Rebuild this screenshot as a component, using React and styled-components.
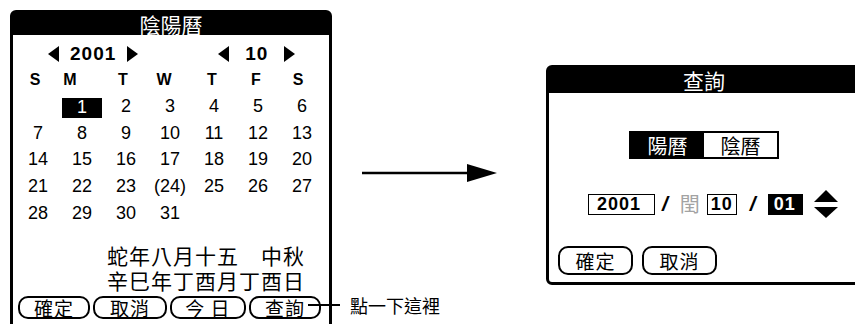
import styled, { createGlobalStyle } from "styled-components";

const GlobalStyle = createGlobalStyle`
  html, body { margin: 0; padding: 0; background: #fff; }
  body {
    font-family: "Liberation Sans", "Noto Sans CJK TC", sans-serif;
    color: #000;
  }
`;

const CJK = `"Noto Sans CJK TC", "Noto Sans CJK SC", sans-serif`;

const Stage = styled.div`
  position: relative;
  width: 855px;
  height: 324px;
  overflow: hidden;
  display: flex;
  align-items: flex-start;
`;

const Window = styled.div`
  flex-shrink: 0;
  box-sizing: border-box;
  width: ${p => p.$w}px;
  height: ${p => p.$h}px;
  margin-left: ${p => p.$left}px;
  margin-top: ${p => p.$top}px;
  border: 3px solid #000;
  border-radius: 6px;
  background: #fff;
  display: flex;
  flex-direction: column;
`;

const TitleBar = styled.div`
  height: ${p => p.$h}px;
  background: #000;
  color: #fff;
  font-family: ${CJK};
  font-size: 21px;
  line-height: ${p => p.$h}px;
  text-align: center;
`;

const NavRow = styled.div`
  display: flex;
  align-items: center;
  height: 22px;
  margin-top: 8px;
  padding-left: 35px;
`;

const Pager = styled.div`
  display: flex;
  align-items: center;
  gap: ${p => p.$gap}px;
  margin-left: ${p => p.$ml || 0}px;
`;

const PagerValue = styled.span`
  font-size: 19px;
  font-weight: bold;
  letter-spacing: 1px;
`;

const WeekRow = styled.div`
  display: grid;
  grid-template-columns: repeat(7, 44px);
  height: 20px;
  margin-top: 5px;
  padding-left: 3px;
`;

const WeekLabel = styled.span`
  text-align: center;
  font-size: 16px;
  font-weight: bold;
  line-height: 20px;
  transform: translateX(${p => p.$shift}px);
`;

const DayGrid = styled.div`
  display: grid;
  grid-template-columns: repeat(7, 44px);
  grid-auto-rows: 26.7px;
  margin-top: 3px;
  padding-left: 3px;
`;

const Day = styled.div`
  display: flex;
  align-items: center;
  justify-content: center;
  font-size: 18px;
`;

const Selected = styled.span`
  display: flex;
  align-items: center;
  justify-content: center;
  width: 40px;
  height: 20px;
  margin-top: 3px;
  background: #000;
  color: #fff;
`;

const Lunar = styled.div`
  margin-top: 17px;
  padding-left: 94px;
  font-family: ${CJK};
  font-size: 21px;
  letter-spacing: 1px;
  line-height: 25px;
  white-space: pre;
`;

const ButtonRow = styled.div`
  display: flex;
  gap: ${p => p.$gap}px;
  margin-top: ${p => p.$mt}px;
  padding-left: ${p => p.$pl}px;
`;

const Button = styled.div`
  box-sizing: border-box;
  width: ${p => p.$w}px;
  height: ${p => p.$h}px;
  border: 2px solid #000;
  border-radius: 10px;
  display: flex;
  align-items: center;
  justify-content: center;
  font-family: ${CJK};
  font-size: 19px;
  line-height: 1;
  letter-spacing: 1px;
`;

const ArrowWrap = styled.div`
  flex-shrink: 0;
  margin-left: 30px;
  margin-top: 164px;
  line-height: 0;
`;

const Toggle = styled.div`
  align-self: center;
  display: flex;
  box-sizing: border-box;
  width: 150px;
  height: 28px;
  margin-top: 38px;
  border: 2px solid #000;
`;

const ToggleHalf = styled.div`
  flex: 1;
  display: flex;
  align-items: center;
  justify-content: center;
  font-family: ${CJK};
  font-size: 20px;
  background: ${p => (p.$on ? "#000" : "#fff")};
  color: ${p => (p.$on ? "#fff" : "#000")};
`;

const DateRow = styled.div`
  display: flex;
  align-items: center;
  height: 28px;
  margin-top: 31px;
  padding-left: 39px;
`;

const Field = styled.div`
  box-sizing: border-box;
  width: ${p => p.$w}px;
  height: 21px;
  margin-left: ${p => p.$ml || 0}px;
  padding-left: ${p => p.$pad}px;
  border: 1px solid #000;
  background: ${p => (p.$on ? "#000" : "#fff")};
  color: ${p => (p.$on ? "#fff" : "#000")};
  font-size: 18px;
  font-weight: bold;
  letter-spacing: 1px;
  line-height: 19px;
`;

const Slash = styled.span`
  margin-left: ${p => p.$ml}px;
  font-size: 21px;
  font-weight: bold;
  font-style: italic;
  line-height: 20px;
`;

const Leap = styled.span`
  margin-left: 12px;
  font-family: ${CJK};
  font-size: 20px;
  color: #a3a3a3;
  line-height: 20px;
`;

const Spinner = styled.svg`
  margin-left: 11px;
`;

const Callout = styled.div`
  position: absolute;
  left: 308px;
  top: 294px;
  display: flex;
  align-items: center;
  height: 22px;
`;

const CalloutLine = styled.span`
  width: 32px;
  height: 2px;
  background: #000;
`;

const CalloutText = styled.span`
  margin-left: 10px;
  font-family: ${CJK};
  font-size: 18px;
  line-height: 22px;
`;

function Tri({ dir }) {
  return (
    <svg width="11" height="16" viewBox="0 0 11 16">
      <polygon points={dir === "left" ? "11,0 0,8 11,16" : "0,0 11,8 0,16"} fill="#000" />
    </svg>
  );
}

const weekdays = [
  ["S", -3], ["M", -12], ["T", -3], ["W", -6], ["T", -2], ["F", -2], ["S", -4],
];

const days = [
  "", "1", "2", "3", "4", "5", "6",
  "7", "8", "9", "10", "11", "12", "13",
  "14", "15", "16", "17", "18", "19", "20",
  "21", "22", "23", "(24)", "25", "26", "27",
  "28", "29", "30", "31",
];

export default function App() {
  return (
    <>
      <GlobalStyle />
      <Stage>
        <Window $w={322} $h={330} $left={10} $top={10}>
          <TitleBar $h={22}>陰陽曆</TitleBar>
          <NavRow>
            <Pager $gap={11}>
              <Tri dir="left" />
              <PagerValue>2001</PagerValue>
              <Tri dir="right" />
            </Pager>
            <Pager $gap={16} $ml={80}>
              <Tri dir="left" />
              <PagerValue>10</PagerValue>
              <Tri dir="right" />
            </Pager>
          </NavRow>
          <WeekRow>
            {weekdays.map(([d, s], i) => (
              <WeekLabel key={i} $shift={s}>{d}</WeekLabel>
            ))}
          </WeekRow>
          <DayGrid>
            {days.map((d, i) => (
              <Day key={i}>{d === "1" ? <Selected>{d}</Selected> : d}</Day>
            ))}
          </DayGrid>
          <Lunar>
            {"蛇年八月十五　中秋"}
            <br />
            {"辛巳年丁酉月丁酉日"}
          </Lunar>
          <ButtonRow $gap={3} $mt={3} $pl={5}>
            <Button $w={72} $h={23}>確定</Button>
            <Button $w={74} $h={23}>取消</Button>
            <Button $w={76} $h={23}>今 日</Button>
            <Button $w={72} $h={23}>查詢</Button>
          </ButtonRow>
        </Window>

        <ArrowWrap>
          <svg width="135" height="18" viewBox="0 0 135 18">
            <line x1="0" y1="9" x2="108" y2="9" stroke="#000" strokeWidth="2.5" />
            <polygon points="105,0 135,9 105,18" fill="#000" />
          </svg>
        </ArrowWrap>

        <Window $w={316} $h={220} $left={49} $top={65}>
          <TitleBar $h={25}>查詢</TitleBar>
          <Toggle>
            <ToggleHalf $on>陽曆</ToggleHalf>
            <ToggleHalf>陰曆</ToggleHalf>
          </Toggle>
          <DateRow>
            <Field $w={67} $pad={8}>2001</Field>
            <Slash $ml={7}>/</Slash>
            <Leap>閏</Leap>
            <Field $w={30} $pad={3} $ml={7}>10</Field>
            <Slash $ml={13}>/</Slash>
            <Field $w={35} $pad={5} $ml={12} $on>01</Field>
            <Spinner width="24" height="28" viewBox="0 0 24 28">
              <polygon points="0,12 12,0 24,12" fill="#000" />
              <polygon points="0,17 24,17 12,28" fill="#000" />
            </Spinner>
          </DateRow>
          <ButtonRow $gap={9} $mt={28} $pl={9}>
            <Button $w={75} $h={29}>確定</Button>
            <Button $w={75} $h={29}>取消</Button>
          </ButtonRow>
        </Window>

        <Callout>
          <CalloutLine />
          <CalloutText>點一下這裡</CalloutText>
        </Callout>
      </Stage>
    </>
  );
}
